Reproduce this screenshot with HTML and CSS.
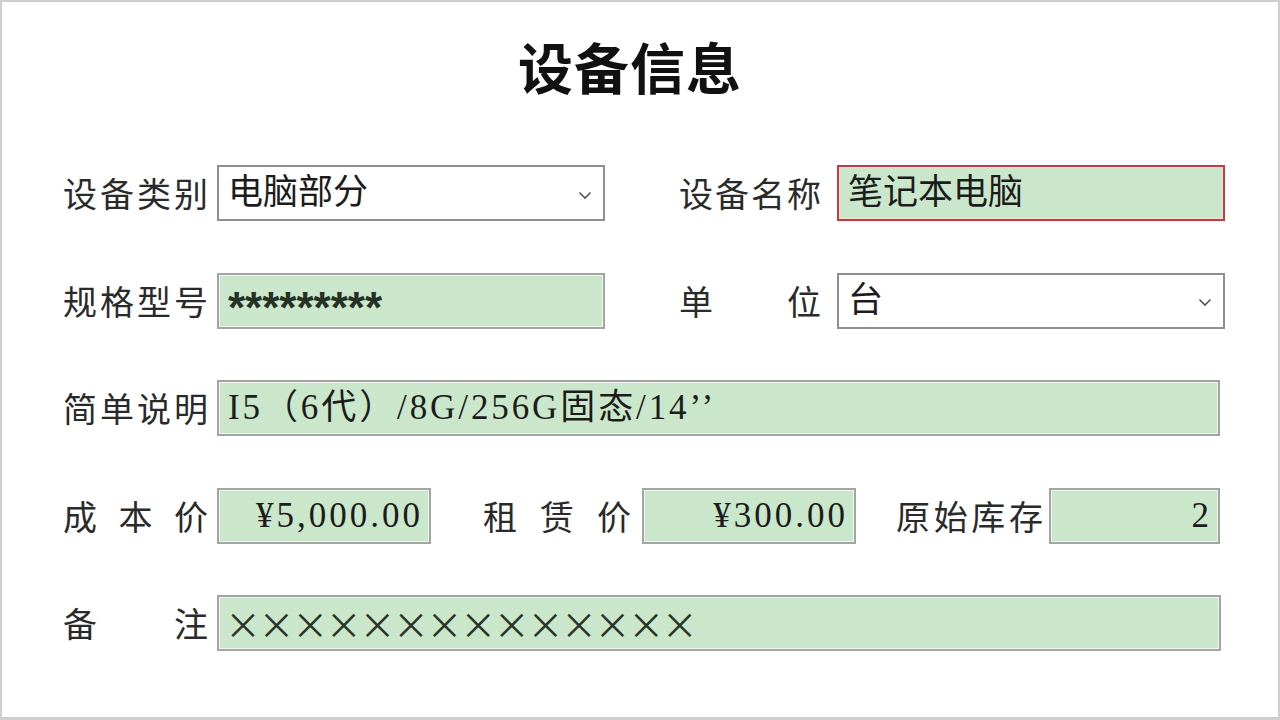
FILE: index.html
```html
<!DOCTYPE html>
<html lang="zh-CN">
<head>
<meta charset="utf-8">
<title>设备信息</title>
<link rel="stylesheet" href="styles.css">
</head>
<body>
<div class="page">
  <h1 class="title">设备信息</h1>
  <div class="form">
    <div class="row">
      <span class="lbl">设备类别</span>
      <div class="field select w-half">
        <span class="val">电脑部分</span>
        <svg class="chev" width="14" height="9" viewBox="0 0 14 9"><path d="M1.5 1.5 L7 7 L12.5 1.5" fill="none" stroke="#555" stroke-width="1.6"/></svg>
      </div>
      <span class="lbl lbl-r">设备名称</span>
      <div class="field green focus w-half">
        <span class="val">笔记本电脑</span>
      </div>
    </div>
    <div class="row">
      <span class="lbl">规格型号</span>
      <div class="field green w-half">
        <span class="val stars">*********</span>
      </div>
      <span class="lbl lbl-r">单 位</span>
      <div class="field select w-half">
        <span class="val">台</span>
        <svg class="chev" width="14" height="9" viewBox="0 0 14 9"><path d="M1.5 1.5 L7 7 L12.5 1.5" fill="none" stroke="#555" stroke-width="1.6"/></svg>
      </div>
    </div>
    <div class="row">
      <span class="lbl">简单说明</span>
      <div class="field green w-full">
        <span class="val desc">I5（6代）/8G/256G固态/14’’</span>
      </div>
    </div>
    <div class="row">
      <span class="lbl">成 本 价</span>
      <div class="field green num w-price">
        <span class="val">¥5,000.00</span>
      </div>
      <span class="lbl lbl-rent">租 赁 价</span>
      <div class="field green num w-price">
        <span class="val">¥300.00</span>
      </div>
      <span class="lbl lbl-stock">原始库存</span>
      <div class="field green num w-stock">
        <span class="val">2</span>
      </div>
    </div>
    <div class="row">
      <span class="lbl">备 注</span>
      <div class="field green w-full2 pad-x">
        <span class="val crosses">××××××××××××××</span>
      </div>
    </div>
  </div>
</div>
</body>
</html>
```

FILE: styles.css
```css
html, body {
  margin: 0;
  padding: 0;
  background: #ffffff;
}

body {
  font-family: "Liberation Serif", "Noto Sans CJK SC", serif;
  color: #222222;
}

.page {
  box-sizing: border-box;
  width: 1280px;
  height: 720px;
  border: 2px solid #cfcfcf;
  border-bottom-width: 3px;
  padding-top: 31px;
  overflow: hidden;
}

.title {
  margin: 0;
  height: 64px;
  line-height: 64px;
  text-align: center;
  padding-right: 20px;
  font-family: "Noto Sans CJK SC", sans-serif;
  font-size: 55px;
  font-weight: 700;
  letter-spacing: 1px;
  color: #111111;
}

.form {
  margin-top: 68px;
  padding-left: 61px;
  display: flex;
  flex-direction: column;
  gap: 51.5px;
}

.row {
  display: flex;
  align-items: center;
  height: 56px;
}

.lbl {
  width: 145px;
  margin-right: 9px;
  font-family: "Noto Sans CJK SC", sans-serif;
  font-size: 34px;
  line-height: 56px;
  color: #2a2a2a;
  text-align: justify;
  text-align-last: justify;
  white-space: nowrap;
}

.lbl-r {
  margin-left: 74px;
  width: 142px;
  margin-right: 16px;
}

.lbl-rent {
  margin-left: 52px;
  width: 148px;
  margin-right: 11px;
}

.lbl-stock {
  margin-left: 40px;
  width: 147px;
  margin-right: 6px;
}

.field {
  box-sizing: border-box;
  height: 56px;
  border: 2px solid #a4a4a4;
  padding: 0 9px;
  display: flex;
  align-items: center;
  font-size: 35px;
  line-height: 52px;
  color: #1c1c1c;
  white-space: nowrap;
}

.green {
  background: #cbe7cb;
  box-shadow: inset 0 0 0 1px #eef6ee;
}

.select {
  background: #ffffff;
  justify-content: space-between;
  border-color: #8f8f8f;
}

.focus {
  border-color: #c23a47;
  box-shadow: inset 0 0 0 1px #f3e6c8;
}

.num {
  justify-content: flex-end;
  letter-spacing: 3px;
  padding-right: 6px;
}

.desc {
  letter-spacing: 2.9px;
}

.pad-x {
  padding-left: 6px;
}

.w-half { width: 388px; }
.w-full { width: 1003px; }
.w-full2 { width: 1004px; }
.w-price { width: 214px; }
.w-stock { width: 171px; }

.chev {
  margin-right: 2px;
  margin-top: 4px;
}

.stars {
  font-family: "Liberation Sans", sans-serif;
  font-size: 44px;
  font-weight: 700;
  line-height: 30px;
  padding-top: 14px;
  color: #263126;
}

.crosses {
  font-family: "Noto Sans CJK SC", sans-serif;
  font-size: 36px;
  letter-spacing: -2.4px;
  color: #2a342a;
}
```
